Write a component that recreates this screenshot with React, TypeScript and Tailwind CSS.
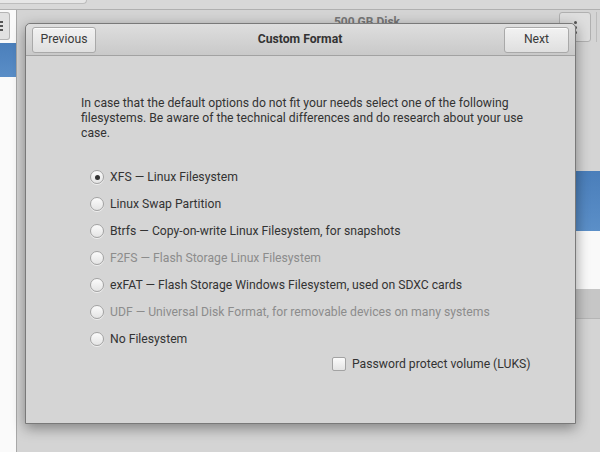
import React from 'react';

const options = [
  { label: 'XFS — Linux Filesystem', checked: true },
  { label: 'Linux Swap Partition' },
  { label: 'Btrfs — Copy-on-write Linux Filesystem, for snapshots' },
  { label: 'F2FS — Flash Storage Linux Filesystem', disabled: true },
  { label: 'exFAT — Flash Storage Windows Filesystem, used on SDXC cards' },
  { label: 'UDF — Universal Disk Format, for removable devices on many systems', disabled: true },
  { label: 'No Filesystem' },
];

function Radio({ checked }: { checked?: boolean }) {
  return (
    <span className="flex h-[14px] w-[14px] shrink-0 items-center justify-center rounded-full border border-[#a3a3a3] bg-gradient-to-b from-[#fbfbfb] to-[#e4e4e4] shadow-[0_1px_0_rgba(255,255,255,0.6)]">
      {checked && <span className="h-[5px] w-[5px] rounded-full bg-[#333]" />}
    </span>
  );
}

function HeaderButton({ children, className }: { children: React.ReactNode; className?: string }) {
  return (
    <button
      className={
        'flex h-[26px] items-center justify-center rounded-[3px] border border-[#a9a9a9] bg-gradient-to-b from-[#f2f2f2] to-[#dfdfdf] text-[12.2px] text-[#3a3a3a] shadow-[inset_0_1px_0_rgba(255,255,255,0.8)] ' +
        (className ?? '')
      }
    >
      {children}
    </button>
  );
}

export default function App() {
  return (
    <div
      className="relative h-[452px] w-[600px] overflow-hidden bg-[#d4d4d4]"
      style={{ fontFamily: 'Roboto, "Noto Sans", sans-serif' }}
    >
      {/* background window */}
      <div className="flex h-full flex-col">
        <div className="relative h-[10px] shrink-0 border-b border-[#b0b0b0] bg-[#d8d8d8]">
          <div className="h-[4px] w-[87px] rounded-br-[4px] border-b border-r border-[#bdbdbd] bg-[#e6e6e6]" />
        </div>
        <div className="flex flex-1">
          {/* sidebar */}
          <div className="relative w-[17px] shrink-0 border-r border-[#a8a8a8] bg-[#fafafa]">
            <div className="mt-[2px] flex h-[28px] w-[10px] items-center rounded-r-[3px] border border-l-0 border-[#b5b5b5] bg-[#e2e2e2]">
              <div className="flex flex-col gap-[2px]">
                <span className="h-[2px] w-[3px] bg-[#555]" />
                <span className="h-[2px] w-[3px] bg-[#555]" />
                <span className="h-[2px] w-[3px] bg-[#555]" />
              </div>
            </div>
            <div className="mt-[3px] h-[34px] bg-gradient-to-b from-[#4b7fbb] to-[#5a8ec7]" />
          </div>
          {/* main area */}
          <div className="flex flex-1 flex-col">
            <div className="flex h-[34px] items-start pt-[2px]">
              <div className="flex-1 pl-[158px] pt-[3px] text-center text-[12px] font-bold leading-[14px] text-[#777]">
                500 GB Disk
              </div>
              <div className="flex h-[30px] w-[32px] flex-col items-center justify-center gap-[2px] rounded-[3px] border border-[#b0b0b0] bg-[#dedede]">
                <span className="h-[3px] w-[3px] rounded-full bg-[#555]" />
                <span className="h-[3px] w-[3px] rounded-full bg-[#555]" />
                <span className="h-[3px] w-[3px] rounded-full bg-[#555]" />
              </div>
              <div className="ml-[5px] mr-[3px] h-[30px] w-px bg-[#bcbcbc]" />
            </div>
            <div className="ml-[40px] mt-[127px] h-[60px] bg-gradient-to-b from-[#4a7eba] to-[#5b8fc8]" />
            <div className="ml-[40px] h-[58px] bg-[#f9f9f9]" />
            <div className="ml-[40px] h-[30px] border-b border-[#b5b5b5] bg-[#c6c6c6]" />
          </div>
        </div>
      </div>

      {/* dialog */}
      <div className="absolute left-[25px] top-[23px] flex h-[401px] w-[551px] flex-col rounded-t-[5px] border border-[#797979] bg-[#d5d5d5] shadow-[0_4px_14px_rgba(0,0,0,0.4)]">
        <div className="flex h-[32px] shrink-0 items-center justify-between rounded-t-[5px] border-b border-[#a2a2a2] bg-gradient-to-b from-[#dedede] to-[#c9c9c9] px-[6px]">
          <HeaderButton className="w-[64px]">Previous</HeaderButton>
          <div className="text-[12.2px] font-bold text-[#333]">Custom Format</div>
          <HeaderButton className="w-[65px]">Next</HeaderButton>
        </div>
        <div className="flex flex-1 flex-col pl-[55px] pt-[40px] text-[12.2px] text-[#333]">
          <p className="w-[448px] leading-[15px]">
            In case that the default options do not fit your needs select one of the following filesystems. Be aware of
            the technical differences and do research about your use case.
          </p>
          <div className="mt-[29px] flex flex-col gap-[13px] pl-[9px]">
            {options.map((o) => (
              <label key={o.label} className="flex h-[14px] items-center gap-[6px] whitespace-nowrap">
                <Radio checked={o.checked} />
                <span className={o.disabled ? 'text-[#8c8c8c]' : 'text-[#333]'}>{o.label}</span>
              </label>
            ))}
          </div>
          <div className="mt-[9px] flex items-center gap-[6px] whitespace-nowrap pl-[251px]">
            <span className="h-[14px] w-[14px] shrink-0 rounded-[2px] border border-[#a3a3a3] bg-gradient-to-b from-[#fbfbfb] to-[#e4e4e4]" />
            <span>Password protect volume (LUKS)</span>
          </div>
        </div>
      </div>
    </div>
  );
}
